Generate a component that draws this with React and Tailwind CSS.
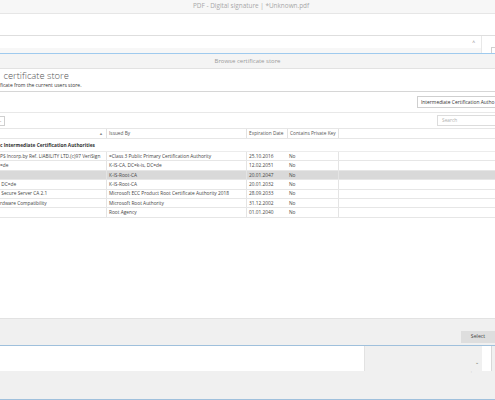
const rows = [
  { name: "PS Incorp.by Ref. LIABILITY LTD.(c)97 VeriSign", by: "=Class 3 Public Primary Certification Authority", exp: "25.10.2016" },
  { name: "=de", by: "K-IS-CA, DC=k-is, DC=de", exp: "12.02.2051" },
  { name: "", by: "K-IS-Root-CA", exp: "20.01.2047", selected: true },
  { name: " DC=de", by: "K-IS-Root-CA", exp: "20.01.2032" },
  { name: " Secure Server CA 2.1", by: "Microsoft ECC Product Root Certificate Authority 2018", exp: "28.09.2033" },
  { name: "rdware Compatibility", by: "Microsoft Root Authority", exp: "31.12.2002" },
  { name: "", by: "Root Agency", exp: "01.01.2040" },
];

export default function App() {
  return (
    <div className="w-[495px] h-[400px] overflow-hidden bg-white flex flex-col font-['Open_Sans',sans-serif] text-[#444]">
      {/* title bar */}
      <div className="h-[14px] shrink-0 bg-[#f7f7f7] border-b border-[#e6e6e6] flex items-center">
        <div className="w-[193px]" />
        <span className="text-[6.4px] text-[#a8a8a8] leading-none whitespace-nowrap">PDF - Digital signature | *Unknown.pdf</span>
      </div>

      <div className="h-[22px] shrink-0 bg-white border-b border-[#dedede]" />

      {/* field row */}
      <div className="h-[18px] shrink-0 flex border-b border-[#9fcaee]">
        <div className="w-[482px] flex flex-col border-r border-[#e8e8e8]">
          <div className="h-[12px] bg-white flex items-center justify-end pr-[6px]">
            <span className="text-[5px] text-[#777] leading-none">^</span>
          </div>
          <div className="flex-1 bg-[#f7f7f7]" />
        </div>
        <div className="flex-1 flex flex-col justify-end pl-[9px]">
          <div className="h-[6px] border-l border-t border-[#d0d0d0]" />
        </div>
      </div>

      {/* browse bar */}
      <div className="h-[15px] shrink-0 bg-[#f4f4f4] border-b border-[#e2e2e2] flex items-center justify-center">
        <span className="text-[6px] text-[#9a9a9a] leading-none">Browse certificate store</span>
      </div>

      {/* heading */}
      <div className="h-[23px] shrink-0 border-b border-[#d6d6d6] flex flex-col pt-[1px]">
        <span className="text-[9.4px] font-light text-[#555] leading-[12px] pl-[1px] whitespace-nowrap">&nbsp;certificate store</span>
        <span className="text-[5px] text-[#333] leading-[7px] whitespace-nowrap">ficate from the current users store.</span>
      </div>

      {/* store select */}
      <div className="h-[21px] shrink-0 border-b border-[#e8e8e8] flex items-center justify-end">
        <div className="w-[78px] h-[12px] border border-r-0 border-[#cfcfcf] flex items-center pl-[3px] overflow-hidden">
          <span className="text-[4.9px] text-[#333] leading-none whitespace-nowrap">Intermediate Certification Autho</span>
        </div>
      </div>

      {/* search row */}
      <div className="h-[15px] shrink-0 flex items-center justify-between">
        <div className="w-[5px] h-[10px] border border-l-0 border-[#cfcfcf] flex items-center">
          <span className="text-[5px] leading-none text-[#555]">.</span>
        </div>
        <div className="w-[58px] h-[11px] border border-r-0 border-[#dcdcdc] flex items-center pl-[4px]">
          <span className="text-[4.8px] text-[#b0b0b0] leading-none">Search</span>
        </div>
      </div>

      {/* table */}
      <div className="h-[191px] shrink-0 flex flex-col border-b border-[#e2e2e2] text-[4.8px] leading-none">
        <div className="h-[11px] shrink-0 flex items-center border-y border-[#e6e6e6] text-[#555]">
          <div className="w-[107px] h-full flex items-center justify-end pr-[3px] border-r border-[#e2e2e2]">
            <span className="text-[4px] text-[#888]">▲</span>
          </div>
          <div className="w-[140px] h-full flex items-center pl-[2px] border-r border-[#e2e2e2]">Issued By</div>
          <div className="w-[41px] h-full flex items-center pl-[2px] border-r border-[#e2e2e2] whitespace-nowrap">Expiration Date</div>
          <div className="w-[51px] h-full flex items-center pl-[2px] border-r border-[#e2e2e2] whitespace-nowrap">Contains Private Key</div>
        </div>
        <div className="h-[13px] shrink-0 flex items-center font-bold text-[#333] border-b border-[#ececec]">
          <span className="whitespace-nowrap">c Intermediate Certification Authorities</span>
        </div>
        {rows.map((r, i) => (
          <div
            key={i}
            className={`h-[9.4px] shrink-0 flex items-center border-b border-[#e6e6e6] ${r.selected ? "bg-[#d9d9d9]" : "bg-white"}`}
          >
            <div className="w-[107px] h-full flex items-center border-r border-[#e4e4e4] whitespace-pre overflow-hidden">{r.name}</div>
            <div className="w-[140px] h-full flex items-center pl-[2px] border-r border-[#e4e4e4] whitespace-nowrap overflow-hidden">{r.by}</div>
            <div className="w-[41px] h-full flex items-center pl-[2px]">{r.exp}</div>
            <div className="w-[51px] h-full flex items-center pl-[1px] border-r border-[#e4e4e4]">No</div>
          </div>
        ))}
      </div>

      {/* action bar */}
      <div className="h-[27px] shrink-0 bg-[#f0f0f0] flex items-end justify-end pb-[1px] border-b border-[#9fc0dc]">
        <button className="w-[34px] h-[12px] bg-[#dedede] text-[5.2px] text-[#444] leading-none mb-[1px]">Select</button>
      </div>

      {/* lower panel */}
      <div className="h-[25px] shrink-0 flex">
        <div className="w-[365px] bg-white border-r border-[#e2e2e2]" />
        <div className="w-[117px] bg-[#f0f0f0] relative">
          <span className="absolute right-[3px] top-[14px] text-[5px] text-[#666] leading-none">⌄</span>
          <span className="absolute right-[10px] top-[24px] text-[4px] text-[#bbb] leading-none">›</span>
        </div>
        <div className="w-[10px] bg-white border-r border-[#d8d8d8]" />
        <div className="flex-1 bg-[#f0f0f0]" />
      </div>
      <div className="flex-1 bg-[#f0f0f0] border-b border-[#9fc0dc]" />
    </div>
  );
}
